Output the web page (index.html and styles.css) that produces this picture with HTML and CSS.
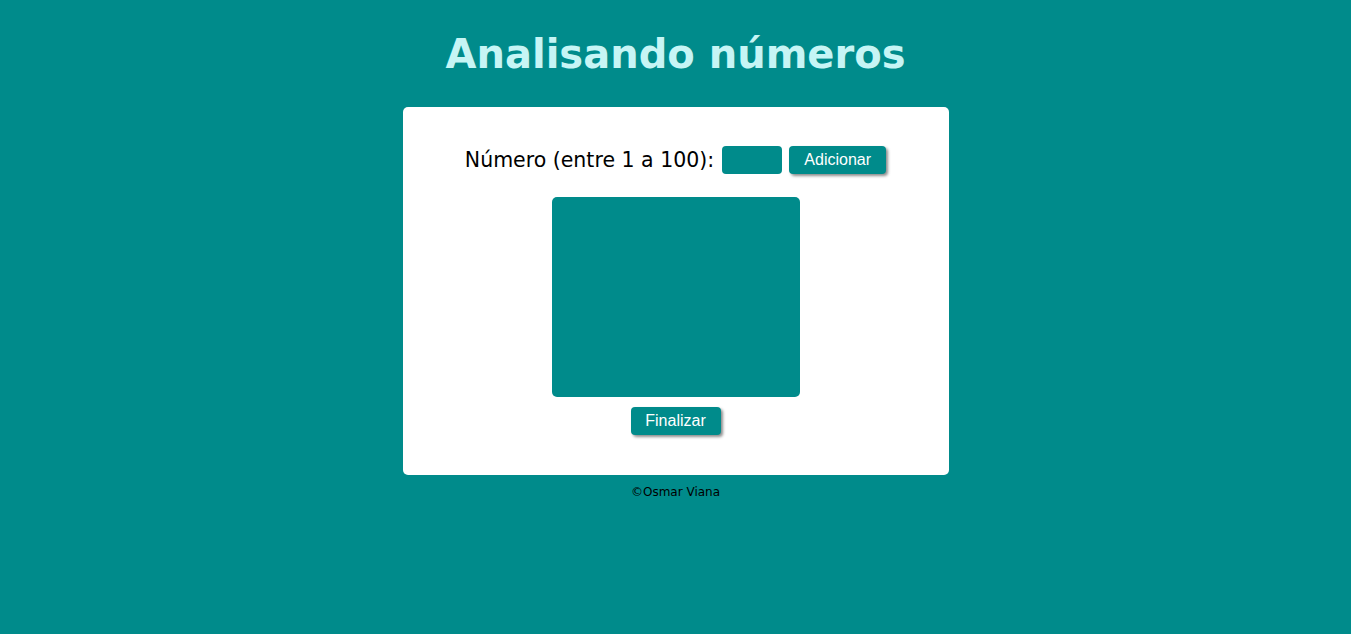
FILE: index.html
```html
<!DOCTYPE html>
<html lang="pt-BR">
<head>
<meta charset="UTF-8">
<title>Analisando números</title>
<link rel="stylesheet" href="styles.css">
</head>
<body>
<header class="header">
  <h1 class="title">Analisando números</h1>
</header>
<main class="card">
  <div class="row">
    <label class="label" for="num">Número (entre 1 a 100):</label>
    <input class="field" type="number" id="num">
    <button class="btn btn-add" type="button">Adicionar</button>
  </div>
  <div class="list"></div>
  <button class="btn btn-end" type="button">Finalizar</button>
</main>
<footer class="footer">
  <p class="copy">&copy;Osmar Viana</p>
</footer>
</body>
</html>
```

FILE: styles.css
```css
html, body {
  margin: 0;
  padding: 0;
}
body {
  background: #008b8b;
  font-family: Verdana, "DejaVu Sans", sans-serif;
  color: #000;
  min-height: 634px;
}
.header {
  display: flex;
  justify-content: center;
  padding-top: 26px;
}
.title {
  margin: 0;
  color: #c6f5f5;
  font-size: 40px;
  font-weight: bold;
  line-height: 56px;
}
.card {
  width: 546px;
  box-sizing: border-box;
  margin: 25px auto 0;
  background: #fff;
  border-radius: 5px;
  padding: 39px 0 40px;
  display: flex;
  flex-direction: column;
  align-items: center;
}
.row {
  display: flex;
  align-items: center;
  gap: 7px;
  height: 28px;
}
.label {
  font-size: 20.5px;
  margin-top: -1px;
}
.field {
  width: 60px;
  height: 28px;
  box-sizing: border-box;
  border: none;
  border-radius: 4px;
  background: #008b8b;
  margin-left: 1px;
}
.btn {
  height: 28px;
  border: none;
  border-radius: 4px;
  background: #008b8b;
  color: #fff;
  font-family: Arial, "Liberation Sans", sans-serif;
  font-size: 16px;
  box-shadow: 2px 2px 3px rgba(0, 0, 0, 0.45);
  padding: 0;
}
.btn-add {
  width: 97px;
}
.list {
  width: 248px;
  height: 200px;
  background: #008b8b;
  border-radius: 5px;
  margin-top: 23px;
}
.btn-end {
  width: 90px;
  margin-top: 10px;
}
.footer {
  display: flex;
  justify-content: center;
}
.copy {
  margin: 10px 0 0;
  font-size: 12px;
}
```
